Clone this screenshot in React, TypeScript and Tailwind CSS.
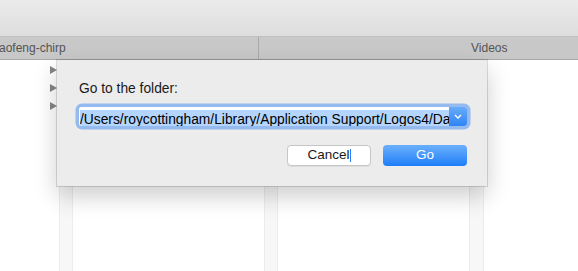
const Triangle = () => (
  <svg width="7" height="8" viewBox="0 0 7 8" className="block">
    <path d="M0 0 L7 4 L0 8 Z" fill="#858585" />
  </svg>
);

export default function App() {
  return (
    <div className="w-[578px] h-[271px] overflow-hidden bg-white flex flex-col font-['Liberation_Sans',Arial,sans-serif] select-none">
      {/* title bar */}
      <div className="h-[37px] shrink-0 bg-gradient-to-b from-[#ebebeb] to-[#dddddd] border-b border-[#c0c0c0]" />

      {/* tab bar */}
      <div className="h-[23px] shrink-0 flex bg-[#c8c8c8] border-b border-[#a9a9a9] text-[12px] text-[#545454]">
        <div className="w-[259px] shrink-0 flex items-center border-r border-[#a8a8a8] overflow-hidden">
          <span className="-ml-px">aofeng-chirp</span>
        </div>
        <div className="flex-1 flex items-center pl-[212px]">
          <span>Videos</span>
        </div>
      </div>

      {/* column browser */}
      <div className="relative flex-1 flex">
        <div className="w-[59px] shrink-0 flex flex-col items-end pr-[2px] pt-[6px] gap-[10px]">
          <Triangle />
          <Triangle />
          <Triangle />
        </div>
        <div className="w-[14px] shrink-0 bg-[#f7f7f7] border-x border-[#ececec]" />
        <div className="w-[191px] shrink-0" />
        <div className="w-[14px] shrink-0 bg-[#f7f7f7] border-x border-[#ececec]" />
        <div className="w-[191px] shrink-0" />
        <div className="w-[15px] shrink-0 bg-[#f7f7f7] border-x border-[#ececec]" />
        <div className="flex-1" />

        {/* go to folder sheet */}
        <div className="absolute left-[57px] top-0 w-[430px] h-[126px] bg-[#ececec] shadow-[0_0_0_1px_rgba(0,0,0,0.13),0_10px_22px_rgba(0,0,0,0.2)] pl-[22px] pr-[20px] pt-[21px] flex flex-col">
          <div className="text-[13.8px] leading-[16px] text-[#1a1a1a]">Go to the folder:</div>

          <div className="mt-[10px] h-[19px] flex rounded-[3px] shadow-[0_0_0_3.5px_rgba(120,170,240,0.75)] overflow-hidden">
            <div className="flex-1 overflow-hidden bg-white pl-px">
              <div className="inline-block bg-[#b3d5fe] text-[13.8px] leading-[19px] text-black whitespace-nowrap pr-1">
                /Users/roycottingham/Library/Application Support/Logos4/Data
              </div>
            </div>
            <div className="w-[18px] shrink-0 bg-gradient-to-b from-[#67abf9] to-[#2f84f5] flex items-center justify-center">
              <svg width="8" height="5" viewBox="0 0 8 5">
                <path d="M1 1 L4 4 L7 1" fill="none" stroke="white" strokeWidth="1.4" />
              </svg>
            </div>
          </div>

          <div className="mt-[19px] flex justify-end gap-[12px]">
            <button className="w-[84px] h-[21px] bg-white border border-[#c6c6c6] rounded-[4px] text-[13.5px] text-[#1a1a1a] flex items-center justify-center shadow-[0_1px_0_rgba(0,0,0,0.06)]">
              <span>Cancel</span>
              <span className="w-px h-[13px] bg-[#2b80f5]" />
            </button>
            <button className="w-[84px] h-[21px] rounded-[4px] bg-gradient-to-b from-[#6aaffb] to-[#1a7ef9] text-[13.5px] text-white flex items-center justify-center">
              Go
            </button>
          </div>
        </div>
      </div>
    </div>
  );
}
